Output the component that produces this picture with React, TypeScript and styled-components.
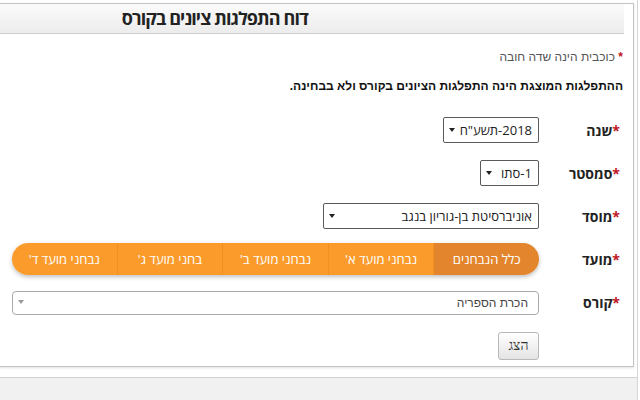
import React, { useState } from "react";
import styled, { createGlobalStyle } from "styled-components";

const GlobalStyle = createGlobalStyle`
  html, body {
    margin: 0;
    padding: 0;
    background: #ffffff;
  }
  body {
    direction: rtl;
    font-family: "Open Sans", "Liberation Sans", "DejaVu Sans", sans-serif;
    color: #333;
  }
  * {
    box-sizing: border-box;
  }
`;

const Page = styled.div`
  height: 400px;
  margin-right: 2px;
  border-right: 1px solid #d6d6d6;
  display: flex;
  flex-direction: column;
  overflow: hidden;
`;

const Panel = styled.div`
  margin-top: 3px;
  margin-right: 3px;
  border: 1px solid #c4c4c4;
  border-left: none;
  padding-right: 9px;
  background: #fff;
  box-shadow: 0 1px 2px rgba(0, 0, 0, 0.12);
`;

const Header = styled.div`
  height: 30px;
  padding-right: 316px;
  border-bottom: 1px solid #cfcfcf;
  background: linear-gradient(to bottom, #fbfbfb, #ececec);
  display: flex;
  align-items: center;
`;

const Title = styled.h2`
  margin: 0;
  font-family: "Open Sans", "Liberation Sans", sans-serif;
  font-size: 18px;
  font-weight: bold;
  letter-spacing: -0.9px;
  color: #222;
  line-height: 29px;
`;

const Note = styled.p`
  margin: 14px 1px 0 0;
  font-family: "Liberation Sans", Arial, sans-serif;
  font-size: 12px;
  line-height: 18px;
  color: #555;
`;

const Star = styled.span`
  color: #c0141b;
  font-weight: bold;
`;

const Info = styled.p`
  margin: 11px 1px 0 0;
  font-family: "Liberation Sans", Arial, sans-serif;
  font-size: 12px;
  font-weight: bold;
  line-height: 18px;
  color: #111;
`;

const Form = styled.div`
  margin-top: 13.5px;
  display: flex;
  flex-direction: column;
`;

const Row = styled.div`
  height: 43px;
  display: grid;
  grid-template-columns: 85px 1fr;
  align-items: center;
`;

const Label = styled.label`
  padding-right: 4px;
  font-size: 14px;
  font-weight: bold;
  color: #222;
`;

const SelectWrap = styled.div<{ $w: number }>`
  position: relative;
  width: ${(p) => p.$w}px;
  justify-self: start;
`;

const NativeSelect = styled.select`
  appearance: none;
  -webkit-appearance: none;
  width: 100%;
  height: 26px;
  padding: 0 6px 0 12px;
  border: 1px solid #5a5a5a;
  border-radius: 2px;
  background: #fff;
  font-family: "Open Sans", "Liberation Sans", sans-serif;
  font-size: 13px;
  color: #222;
  direction: rtl;
  outline: none;
`;

const Arrow = styled.span<{ $color?: string }>`
  position: absolute;
  left: 6px;
  top: 50%;
  margin-top: -2px;
  width: 0;
  height: 0;
  border-left: 3px solid transparent;
  border-right: 3px solid transparent;
  border-top: 4px solid ${(p) => p.$color ?? "#222"};
  pointer-events: none;
`;

const CourseSelect = styled(NativeSelect)`
  height: 24px;
  border: 1px solid #aaa;
  border-radius: 4px;
  padding-right: 10px;
  font-family: "Liberation Sans", Arial, sans-serif;
  font-size: 12px;
  color: #444;
`;

const Segments = styled.div`
  width: 527px;
  height: 32px;
  justify-self: start;
  display: flex;
  border-radius: 16px;
  overflow: hidden;
  box-shadow: 0 2px 4px rgba(0, 0, 0, 0.25);
`;

const Segment = styled.button<{ $active?: boolean }>`
  flex: 1;
  border: none;
  border-left: 1px solid #f0911f;
  background: ${(p) => (p.$active ? "#e3852c" : "#fb9b2b")};
  color: #fff;
  font-family: "Open Sans", "Liberation Sans", sans-serif;
  font-size: 13px;
  cursor: pointer;
  padding: 0;

  &:last-child {
    border-left: none;
  }
`;

const ButtonRow = styled.div`
  padding: 8.5px 85px 6px 0;
  display: flex;
`;

const ShowButton = styled.button`
  width: 41px;
  height: 28px;
  border: 1px solid #b8b8b8;
  border-radius: 3px;
  background: linear-gradient(to bottom, #ffffff, #e4e4e4);
  font-family: "Liberation Serif", "DejaVu Serif", serif;
  font-size: 14px;
  color: #333;
  padding: 0;
  cursor: pointer;
`;

const Footer = styled.div`
  flex: 1;
  margin-top: 10px;
  border-top: 1px solid #d2d2d2;
  background: #f1f1f1;
`;

const sessions = [
  "כלל הנבחנים",
  "נבחני מועד א'",
  "נבחני מועד ב'",
  "בחני מועד ג'",
  "נבחני מועד ד'",
];

const App: React.FC = () => {
  const [session, setSession] = useState(0);

  return (
    <>
      <GlobalStyle />
      <Page>
        <Panel>
          <Header>
            <Title>דוח התפלגות ציונים בקורס</Title>
          </Header>
          <Note>
            <Star>*</Star> כוכבית הינה שדה חובה
          </Note>
          <Info>ההתפלגות המוצגת הינה התפלגות הציונים בקורס ולא בבחינה.</Info>

          <Form>
            <Row>
              <Label>
                <Star>*</Star>שנה
              </Label>
              <SelectWrap $w={96}>
                <NativeSelect defaultValue="2018">
                  <option value="2018">2018-תשע"ח</option>
                </NativeSelect>
                <Arrow />
              </SelectWrap>
            </Row>
            <Row>
              <Label>
                <Star>*</Star>סמסטר
              </Label>
              <SelectWrap $w={59}>
                <NativeSelect defaultValue="1">
                  <option value="1">1-סתו</option>
                </NativeSelect>
                <Arrow />
              </SelectWrap>
            </Row>
            <Row>
              <Label>
                <Star>*</Star>מוסד
              </Label>
              <SelectWrap $w={216}>
                <NativeSelect defaultValue="bgu">
                  <option value="bgu">אוניברסיטת בן-גוריון בנגב</option>
                </NativeSelect>
                <Arrow />
              </SelectWrap>
            </Row>
            <Row>
              <Label>
                <Star>*</Star>מועד
              </Label>
              <Segments>
                {sessions.map((s, i) => (
                  <Segment key={s} $active={i === session} onClick={() => setSession(i)}>
                    {s}
                  </Segment>
                ))}
              </Segments>
            </Row>
            <Row>
              <Label>
                <Star>*</Star>קורס
              </Label>
              <SelectWrap $w={527}>
                <CourseSelect defaultValue="lib">
                  <option value="lib">הכרת הספריה</option>
                </CourseSelect>
                <Arrow $color="#999" />
              </SelectWrap>
            </Row>
          </Form>
          <ButtonRow>
            <ShowButton>הצג</ShowButton>
          </ButtonRow>
        </Panel>
        <Footer />
      </Page>
    </>
  );
};

export default App;
